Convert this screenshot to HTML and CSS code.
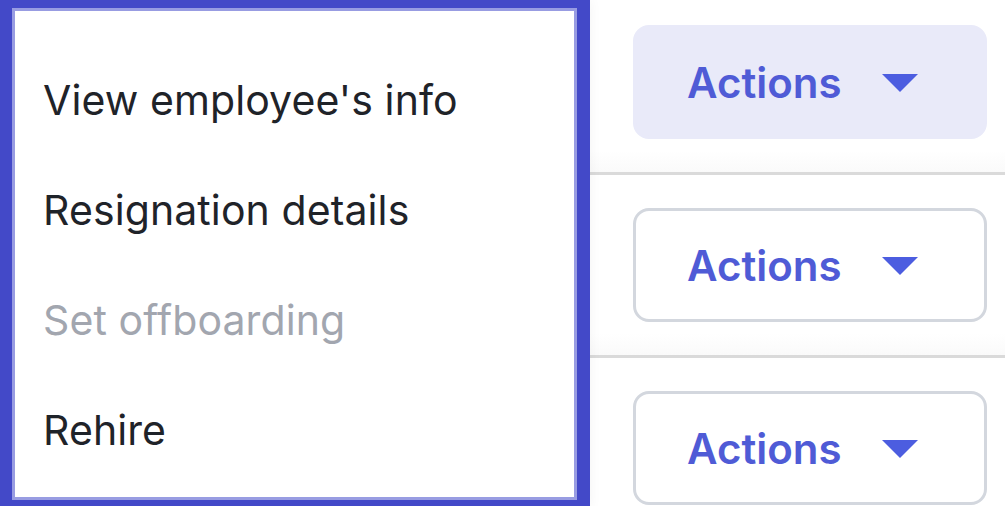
FILE: index.html
```html
<!DOCTYPE html>
<html lang="en">
<head>
    <meta charset="UTF-8">
    <meta name="viewport" content="width=device-width, initial-scale=1.0">
    <title>Employee actions</title>
    <link rel="stylesheet" href="styles.css">
</head>
<body>

    <div class="page">
        <ul class="menu">
            <li class="menu-item">View employee's info</li>
            <li class="menu-item">Resignation details</li>
            <li class="menu-item disabled">Set offboarding</li>
            <li class="menu-item">Rehire</li>
        </ul>

        <div class="rows">
            <div class="row">
                <button class="actions open">
                    <span>Actions</span>
                    <svg class="caret" width="36" height="18" viewBox="0 0 36 18"><path d="M0 0 H36 L18 18 Z" fill="currentColor"/></svg>
                </button>
            </div>
            <div class="row">
                <button class="actions">
                    <span>Actions</span>
                    <svg class="caret" width="36" height="18" viewBox="0 0 36 18"><path d="M0 0 H36 L18 18 Z" fill="currentColor"/></svg>
                </button>
            </div>
            <div class="row">
                <button class="actions">
                    <span>Actions</span>
                    <svg class="caret" width="36" height="18" viewBox="0 0 36 18"><path d="M0 0 H36 L18 18 Z" fill="currentColor"/></svg>
                </button>
            </div>
        </div>
    </div>

</body>
</html>
```

FILE: styles.css
```css
body {
    font-family: Inter, "Noto Sans", sans-serif;
    background-color: #fff;
    margin: 0;
    overflow: hidden;
}
.page {
    display: flex;
    width: 1005px;
    height: 506px;
    overflow: hidden;
}

/* menu aberto */
.menu {
    list-style: none;
    margin: 0;
    padding: 37px 0 0 31px;
    width: 590px;
    height: 508px;
    box-sizing: border-box;
    flex-shrink: 0;
    border-style: solid;
    border-color: #4349c8;
    border-width: 8px 13px 8px 12px;
    box-shadow: inset 0 0 0 3px #989ce2, 0 0 12px rgba(0, 0, 0, 0.05);
    background-color: #fff;
    position: relative;
    z-index: 1;
}
.menu-item {
    font-size: 41px;
    line-height: 110px;
    height: 110px;
    color: #1f2329;
    letter-spacing: 0.1px;
}
.menu-item.disabled {
    color: #a2a6af;
}

/* coluna com os botões */
.rows {
    flex: 1;
    margin-top: -8px;
}
.row {
    padding: 33px 0 33px 43px;
    border-bottom: 3px solid #dadada;
    background: linear-gradient(to bottom, #fff 88%, #fafafa);
}
.actions {
    display: flex;
    align-items: center;
    width: 354px;
    height: 114px;
    padding: 0 0 0 51px;
    border: 3px solid #d3d7de;
    border-radius: 16px;
    background-color: #fff;
    color: #4f5bd6;
    font-family: Inter, sans-serif;
    font-size: 42px;
    font-weight: 600;
    box-sizing: border-box;
}
.actions.open {
    background-color: #e9eaf9;
    border-color: #e9eaf9;
}
.caret {
    margin-left: 40px;
    color: #4c5de0;
    margin-top: 2px;
}
```
